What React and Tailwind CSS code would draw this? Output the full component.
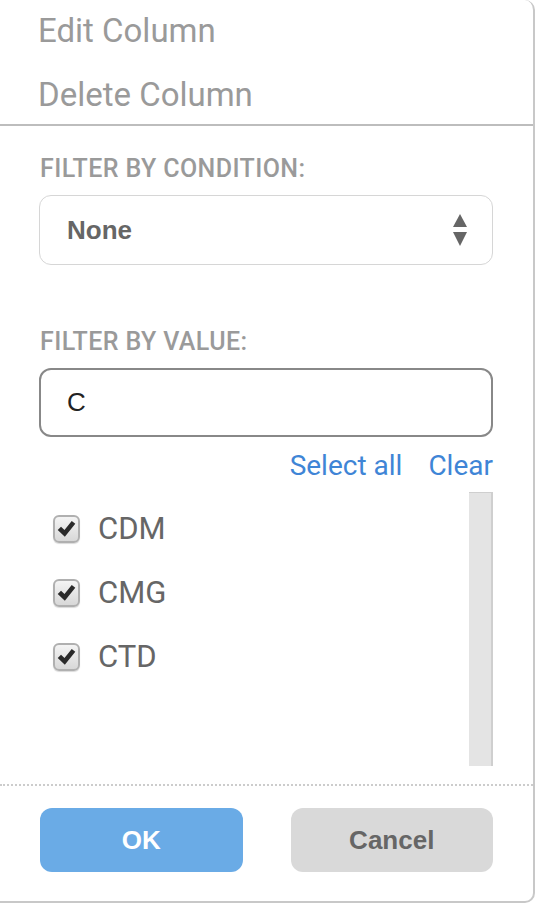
import React from 'react'

const items = ['CDM', 'CMG', 'CTD']

function CheckBox() {
  return (
    <div className="w-[27px] h-[28px] rounded-[6px] border-2 border-[#b0b0b0] bg-gradient-to-b from-[#f4f4f4] to-[#d8d8d8] shadow-[0_1px_1px_rgba(0,0,0,0.15)] flex items-center justify-center">
      <svg width="19" height="18" viewBox="0 0 16 15">
        <path d="M0.6 8.4 L3.4 5.6 L6.3 8.4 L12.4 0.8 L15.4 3 L6.6 14 Z" fill="#2a2a2a" />
      </svg>
    </div>
  )
}

export default function App() {
  return (
    <div className="w-[536px] h-[904px] bg-white" style={{ fontFamily: 'Roboto, "Noto Sans", sans-serif' }}>
      <div className="w-[535px] h-[903px] bg-white border-r-2 border-b-2 border-[#c8c8c8] rounded-tr-[10px] rounded-br-[10px] flex flex-col">
        {/* menu */}
        <div className="h-[126px] border-b-2 border-[#bdbdbd] pt-[15px] pl-[38px] flex flex-col gap-[32px] text-[33px] leading-[32px] text-[#9a9a9a]">
          <div>Edit Column</div>
          <div>Delete Column</div>
        </div>

        <div className="pl-[39px] pr-[40px] flex flex-col">
          {/* condition */}
          <div className="mt-[31px] pl-[1px] text-[25px] leading-[24px] tracking-[0.4px] font-medium text-[#9a9a9a]">FILTER BY CONDITION:</div>
          <div className="mt-[14px] h-[70px] rounded-[12px] border-[1.5px] border-[#d6d6d6] flex items-center justify-between pl-[27px] pr-[25px]">
            <span className="text-[26px] font-bold text-[#666]" style={{ fontFamily: '"Liberation Sans", Arial, sans-serif' }}>None</span>
            <svg width="14" height="32" viewBox="0 0 14 32">
              <path d="M7 0 L14 13 L0 13 Z" fill="#666" />
              <path d="M0 18 L14 18 L7 32 Z" fill="#666" />
            </svg>
          </div>

          {/* value */}
          <div className="mt-[65px] pl-[1px] text-[25px] leading-[24px] tracking-[0.4px] font-medium text-[#9a9a9a]">FILTER BY VALUE:</div>
          <div className="mt-[14px] h-[69px] rounded-[12px] border-2 border-[#888] flex items-center pl-[26px]">
            <span className="text-[26px] text-[#222]" style={{ fontFamily: '"Liberation Sans", Arial, sans-serif' }}>C</span>
          </div>
          <div className="mt-[15px] h-[28px] flex justify-end gap-[26px] text-[28px] leading-[28px] text-[#3f85d6]">
            <span>Select all</span>
            <span>Clear</span>
          </div>

          {/* list */}
          <div className="mt-[12px] h-[274px] flex">
            <div className="flex-1 pt-[5px] pl-[14px] flex flex-col">
              {items.map((it) => (
                <div key={it} className="h-[64px] flex items-center gap-[18px]">
                  <CheckBox />
                  <span className="text-[31px] leading-[32px] text-[#666]">{it}</span>
                </div>
              ))}
            </div>
            <div className="w-[24px] h-full bg-[#e4e4e4] border-t border-r-2 border-[#cfcfcf]" />
          </div>
        </div>

        {/* footer */}
        <div className="mt-[18px] border-t-2 border-dotted border-[#cccccc] pt-[22px] pl-[40px] pr-[40px] grid grid-cols-2 gap-[48px]" style={{ fontFamily: '"Liberation Sans", Arial, sans-serif' }}>
          <button className="h-[64px] rounded-[12px] bg-[#6aabe6] text-white text-[26px] font-bold">OK</button>
          <button className="h-[64px] rounded-[12px] bg-[#d9d9d9] text-[#666] text-[26px] font-bold">Cancel</button>
        </div>
      </div>
    </div>
  )
}
